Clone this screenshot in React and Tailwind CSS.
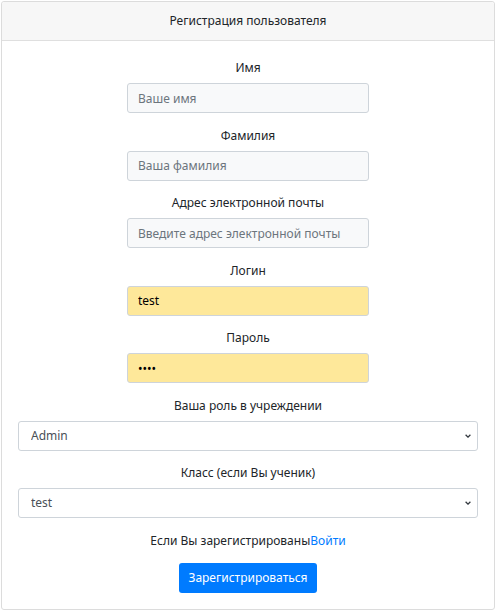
import { useState } from 'react'

const inputClass =
  'block mx-auto w-[242px] h-[30px] px-[10px] rounded-[3px] border border-[#ced4da] text-[12px] text-[#495057] placeholder:text-[#6c757d] outline-none'

const selectClass =
  'block w-full h-[30px] pl-[12px] pr-[24px] appearance-none rounded-[3px] border border-[#ced4da] bg-white text-[12px] text-[#495057] outline-none'

function Chevron() {
  return (
    <svg
      className="pointer-events-none absolute right-[7px] top-1/2 -translate-y-1/2"
      width="6"
      height="4"
      viewBox="0 0 6 4"
    >
      <path d="M0.6 0.7 L3 3.1 L5.4 0.7" fill="none" stroke="#343a40" strokeWidth="1.3" />
    </svg>
  )
}

function Group({ label, children }) {
  return (
    <div className="mb-[12.5px]">
      <label className="block h-[19px] leading-[19px] mb-[6px] text-[12px] text-[#212529]">{label}</label>
      {children}
    </div>
  )
}

export default function App() {
  const [role, setRole] = useState('Admin')
  const [klass, setKlass] = useState('test')

  return (
    <div className="pl-px pt-px bg-white min-h-screen" style={{ fontFamily: '"Noto Sans", "Open Sans", sans-serif' }}>
      <div className="w-[494px] border border-[#dcdcdc] rounded-[3px] bg-white">
        <div className="h-[39px] flex items-center justify-center bg-[#f7f7f7] border-b border-[#dfdfdf] text-[12px] text-[#212529] rounded-t-[3px]">
          Регистрация пользователя
        </div>
        <div className="px-[16px] pt-[17px] pb-[16px] text-center">
          <Group label="Имя">
            <input className={`${inputClass} bg-[#f8f9fa]`} placeholder="Ваше имя" />
          </Group>
          <Group label="Фамилия">
            <input className={`${inputClass} bg-[#f8f9fa]`} placeholder="Ваша фамилия" />
          </Group>
          <Group label="Адрес электронной почты">
            <input className={`${inputClass} bg-[#f8f9fa]`} placeholder="Введите адрес электронной почты" />
          </Group>
          <Group label="Логин">
            <input className={`${inputClass} bg-[#fee89a] text-black`} defaultValue="test" />
          </Group>
          <Group label="Пароль">
            <input type="password" className={`${inputClass} bg-[#fee89a] text-black`} defaultValue="test" />
          </Group>
          <Group label="Ваша роль в учреждении">
            <div className="relative">
              <select value={role} onChange={(e) => setRole(e.target.value)} className={selectClass}>
                <option>Admin</option>
                <option>Teacher</option>
                <option>Student</option>
              </select>
              <Chevron />
            </div>
          </Group>
          <Group label="Класс (если Вы ученик)">
            <div className="relative">
              <select value={klass} onChange={(e) => setKlass(e.target.value)} className={selectClass}>
                <option>test</option>
              </select>
              <Chevron />
            </div>
          </Group>
          <p className="h-[19px] leading-[19px] mb-[13px] text-[12px] text-[#212529]">
            Если Вы зарегистрированы<a href="#" className="text-[#007bff]">Войти</a>
          </p>
          <button className="h-[30px] w-[138px] rounded-[3px] bg-[#007bff] text-white text-[12px]">
            Зарегистрироваться
          </button>
        </div>
      </div>
    </div>
  )
}
